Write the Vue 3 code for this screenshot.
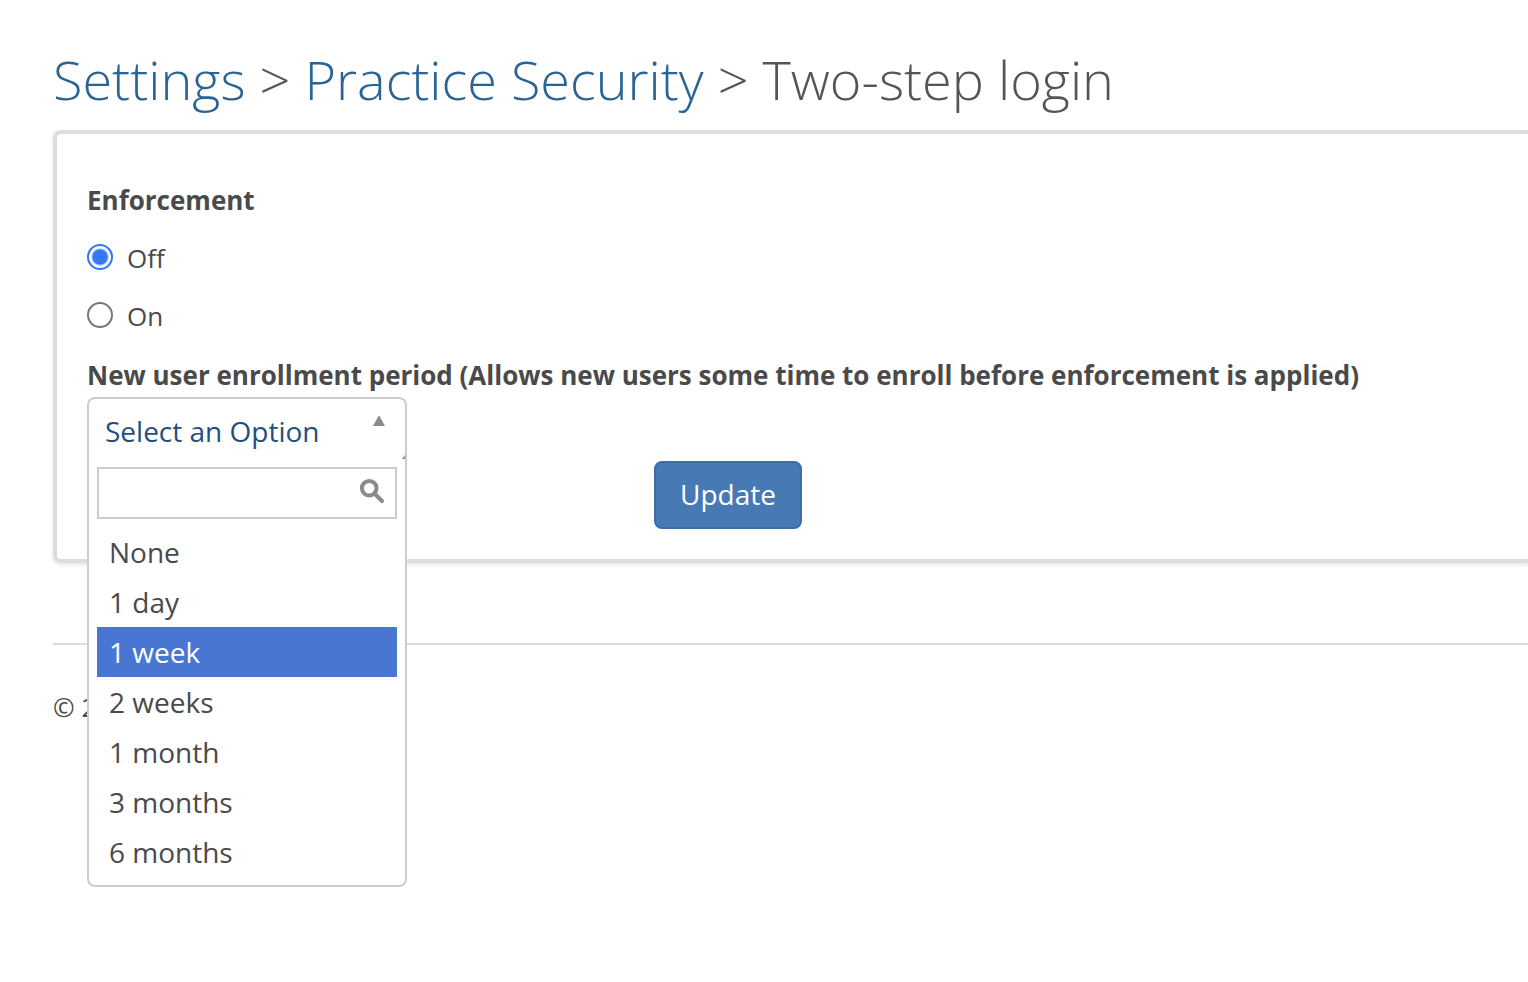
<script setup>
import { ref } from 'vue'

const enforcement = ref('off')
const open = ref(true)
const query = ref('')
const highlighted = ref('1 week')
const options = ['None', '1 day', '1 week', '2 weeks', '1 month', '3 months', '6 months']
</script>

<template>
  <div class="page">
    <h1><a href="#">Settings</a> &gt; <a href="#">Practice Security</a> &gt; Two-step login</h1>

    <form class="panel" @submit.prevent>
      <fieldset class="group">
        <legend class="field-title">Enforcement</legend>
        <label class="choice" for="enforce-off">
          <input id="enforce-off" v-model="enforcement" type="radio" name="enforcement" value="off" />
          Off
        </label>
        <label class="choice" for="enforce-on">
          <input id="enforce-on" v-model="enforcement" type="radio" name="enforcement" value="on" />
          On
        </label>
      </fieldset>

      <label class="field-title period" for="period">New user enrollment period (Allows new users some time to enroll before enforcement is applied)</label>
      <div class="picker">
        <button id="period" class="picker-head" type="button" aria-haspopup="listbox" :aria-expanded="open" @click="open = !open">
          Select an Option
          <svg class="arrow" width="34" height="48" viewBox="0 0 34 48" aria-hidden="true">
            <path d="M2 15L7.500 5h1L14 15z" />
            <path d="M31 48l3-4v4z" />
          </svg>
        </button>
        <div v-if="open" class="menu">
          <div class="search">
            <input v-model="query" type="text" aria-label="Search options" />
            <svg width="26" height="26" viewBox="0 0 26 26" aria-hidden="true">
              <circle cx="10.200" cy="10.200" r="7.300" />
              <path d="M15.500 15.500l7.500 7.500" stroke-linecap="round" />
            </svg>
          </div>
          <ul role="listbox" aria-label="New user enrollment period">
            <li
              v-for="option in options"
              :key="option"
              role="option"
              :aria-selected="option === highlighted"
              :class="{ active: option === highlighted }"
              @mouseenter="highlighted = option"
            >{{ option }}</li>
          </ul>
        </div>
      </div>

      <div class="actions">
        <button class="update" type="submit">Update</button>
      </div>
    </form>

    <footer>© 2</footer>
  </div>
</template>

<style>
body {
  background: #fff;
}
</style>

<style scoped>
.page {
  box-sizing: border-box;
  min-height: 100vh;
  padding: 40px 0 40px 53px;
  font-family: "Open Sans", "Noto Sans", sans-serif;
  font-size: 26px;
  line-height: 36px;
  color: #4a4a4a;
}

h1 {
  margin: 0 0 12px;
  font-size: 54px;
  font-weight: 300;
  line-height: 78px;
  color: #555;
}

h1 a {
  color: #2a6496;
  text-decoration: none;
}

.panel {
  padding: 48px 30px 30px;
  border: 4px solid #ddd;
  border-right: 0;
  border-radius: 8px 0 0 8px;
  box-shadow: 0 2px 4px rgba(0, 0, 0, 0.1);
}

.group {
  margin: 0;
  padding: 0;
  border: 0;
}

.field-title {
  display: block;
  padding: 0;
  font-weight: 700;
}

.choice {
  display: flex;
  align-items: center;
  gap: 14px;
  margin-top: 22px;
}

.choice input {
  appearance: none;
  box-sizing: border-box;
  width: 26px;
  height: 26px;
  margin: 0 0 2px;
  border: 2px solid #767676;
  border-radius: 50%;
  background: #fff;
}

.choice input:checked {
  border-color: #3478f6;
  background: radial-gradient(circle, #3478f6 7px, #fff 9px);
}

.period {
  margin-top: 23px;
}

.picker {
  position: relative;
  width: 320px;
  margin-top: 4px;
}

.picker-head {
  position: relative;
  display: block;
  box-sizing: border-box;
  width: 100%;
  height: 62px;
  padding: 4px 16px 0;
  border: 2px solid #ccc;
  border-bottom: 0;
  border-radius: 8px 8px 0 0;
  background: #fff;
  color: #1f5080;
  font: inherit;
  font-size: 28px;
  line-height: 38px;
  text-align: left;
}

.arrow {
  position: absolute;
  right: 0;
  bottom: 0;
  fill: #8b8b8b;
}

.menu {
  position: absolute;
  top: 100%;
  left: 0;
  z-index: 1;
  box-sizing: border-box;
  width: 100%;
  padding: 8px;
  border: 2px solid #ccc;
  border-top: 0;
  border-radius: 0 0 8px 8px;
  background: #fff;
}

.search {
  position: relative;
  margin-bottom: 8px;
}

.search input {
  display: block;
  box-sizing: border-box;
  width: 100%;
  height: 52px;
  padding: 0 44px 0 8px;
  border: 2px solid #ccc;
  background: #fff;
  font: inherit;
  color: inherit;
}

.search svg {
  position: absolute;
  top: 11px;
  right: 12px;
  fill: none;
  stroke: #8b8b8b;
  stroke-width: 4;
}

ul {
  margin: 0;
  padding: 0;
  list-style: none;
}

li {
  padding: 0 12px;
  font-size: 28px;
  line-height: 50px;
}

li.active {
  background: #4876d2;
  color: #fff;
}

.actions {
  margin-top: 2px;
  padding-left: 567px;
}

.update {
  display: block;
  height: 68px;
  padding: 0 24px 2px;
  border: 2px solid #3d6da4;
  border-radius: 8px;
  background: #477ab4;
  color: #fff;
  font: inherit;
  font-size: 28px;
  line-height: 38px;
}

footer {
  margin-top: 80px;
  padding-top: 44px;
  border-top: 2px solid #ddd;
}
</style>
